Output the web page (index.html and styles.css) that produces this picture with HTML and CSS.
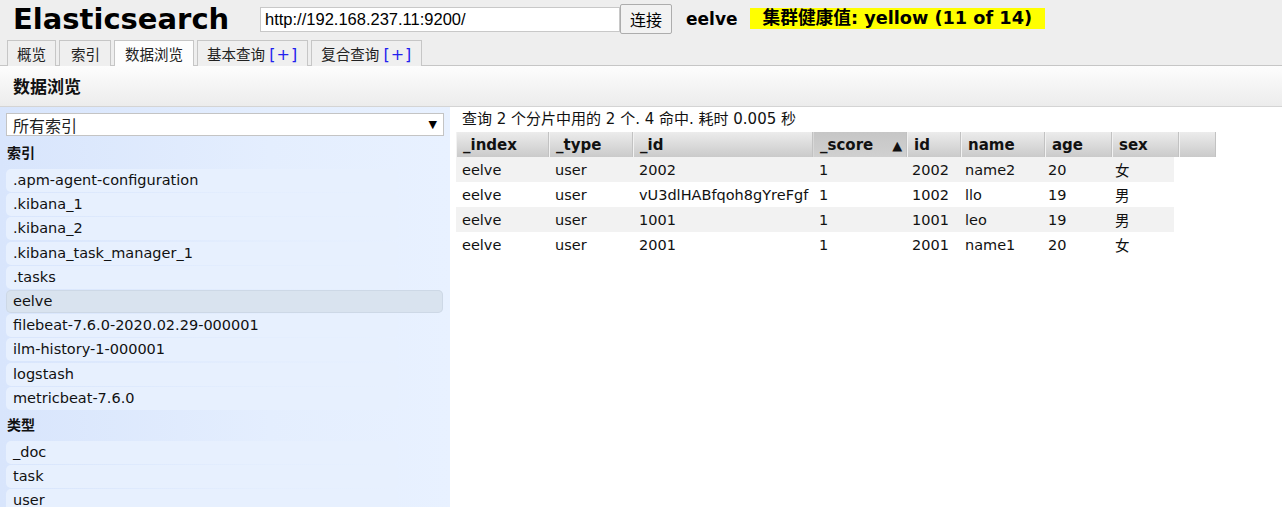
FILE: index.html
```html
<!DOCTYPE html>
<html lang="zh">
<head>
<meta charset="utf-8">
<title>Elasticsearch</title>
<link rel="stylesheet" href="styles.css">
</head>
<body>
<header class="top">
  <h1 class="logo">Elasticsearch</h1>
  <input class="url" type="text" value="http://192.168.237.11:9200/">
  <button class="connect">连接</button>
  <span class="cluster">eelve</span>
  <span class="health">集群健康值: yellow (11 of 14)</span>
</header>
<nav class="tabs">
  <span class="tab">概览</span>
  <span class="tab">索引</span>
  <span class="tab active">数据浏览</span>
  <span class="tab">基本查询 <span class="plus">[+]</span></span>
  <span class="tab">复合查询 <span class="plus">[+]</span></span>
</nav>
<div class="subhead">数据浏览</div>
<div class="main">
  <aside class="side">
    <div class="select"><span>所有索引</span><span class="arrow">▼</span></div>
    <div class="group">索引</div>
    <div class="item">.apm-agent-configuration</div>
    <div class="item">.kibana_1</div>
    <div class="item">.kibana_2</div>
    <div class="item">.kibana_task_manager_1</div>
    <div class="item">.tasks</div>
    <div class="item selected">eelve</div>
    <div class="item">filebeat-7.6.0-2020.02.29-000001</div>
    <div class="item">ilm-history-1-000001</div>
    <div class="item">logstash</div>
    <div class="item">metricbeat-7.6.0</div>
    <div class="group">类型</div>
    <div class="item">_doc</div>
    <div class="item">task</div>
    <div class="item">user</div>
  </aside>
  <section class="results">
    <div class="info">查询 2 个分片中用的 2 个. 4 命中. 耗时 0.005 秒</div>
    <div class="grid">
      <div class="row head">
        <span class="c h1">_index</span>
        <span class="c h2">_type</span>
        <span class="c h3">_id</span>
        <span class="c h4 sorted">_score<span class="tri">▲</span></span>
        <span class="c h5">id</span>
        <span class="c h6">name</span>
        <span class="c h7">age</span>
        <span class="c h8">sex</span>
        <span class="c h9"></span>
      </div>
      <div class="row odd">
        <span class="c c1">eelve</span><span class="c c2">user</span><span class="c c3">2002</span><span class="c c4">1</span><span class="c c5">2002</span><span class="c c6">name2</span><span class="c c7">20</span><span class="c c8">女</span>
      </div>
      <div class="row">
        <span class="c c1">eelve</span><span class="c c2">user</span><span class="c c3">vU3dlHABfqoh8gYreFgf</span><span class="c c4">1</span><span class="c c5">1002</span><span class="c c6">llo</span><span class="c c7">19</span><span class="c c8">男</span>
      </div>
      <div class="row odd">
        <span class="c c1">eelve</span><span class="c c2">user</span><span class="c c3">1001</span><span class="c c4">1</span><span class="c c5">1001</span><span class="c c6">leo</span><span class="c c7">19</span><span class="c c8">男</span>
      </div>
      <div class="row">
        <span class="c c1">eelve</span><span class="c c2">user</span><span class="c c3">2001</span><span class="c c4">1</span><span class="c c5">2001</span><span class="c c6">name1</span><span class="c c7">20</span><span class="c c8">女</span>
      </div>
    </div>
  </section>
</div>
</body>
</html>
```
FILE: styles.css
```css
html, body {
  margin: 0;
  padding: 0;
}
body {
  background: #eeeeee;
  font-family: "DejaVu Sans", "Noto Sans CJK SC", sans-serif;
  font-size: 14.5px;
  color: #111;
  height: 507px;
  overflow: hidden;
}
.top {
  display: flex;
  align-items: center;
  height: 37px;
  padding-left: 13px;
}
.logo {
  margin: 0 33px 0 0;
  font-size: 29px;
  font-weight: bold;
  color: #000;
  width: 214px;
  white-space: nowrap;
  line-height: 36px;
}
.url {
  box-sizing: border-box;
  width: 360px;
  height: 25px;
  margin: 1px 0 0 0;
  border: 1px solid #c8c8c8;
  background: #fff;
  padding: 0 4px;
  font-family: "Liberation Sans", sans-serif;
  font-size: 16.5px;
  color: #000;
}
.connect {
  box-sizing: border-box;
  width: 52px;
  height: 30px;
  margin: 0 14px 0 0;
  border: 1px solid #adadad;
  border-radius: 2px;
  background: #f2f2f2;
  font-family: "Noto Sans CJK SC", sans-serif;
  font-size: 16px;
  color: #000;
  padding: 0;
}
.cluster {
  font-weight: bold;
  font-size: 17px;
  color: #000;
  margin-right: 12px;
}
.health {
  background: #ffff00;
  font-weight: bold;
  font-size: 17.7px;
  color: #000;
  padding: 0 13px 0 13px;
  height: 21px;
  line-height: 21px;
  white-space: nowrap;
}
.tabs {
  display: flex;
  gap: 3px;
  margin-top: 3px;
  padding-left: 7px;
  height: 25px;
  border-bottom: 1px solid #c6c6c6;
}
.tab {
  box-sizing: border-box;
  height: 26px;
  border: 1px solid #c6c6c6;
  border-bottom: none;
  background: #efefef;
  padding: 0 9px;
  font-size: 14.5px;
  line-height: 26px;
  color: #222;
  font-family: "Noto Sans CJK SC", sans-serif;
  white-space: nowrap;
}
.tab:nth-child(2) { padding: 0 10px 0 11px; }
.tab.active {
  background: #fdfdfd;
  padding: 0 10px;
}
.plus {
  color: #2222ee;
  font-family: "DejaVu Sans", sans-serif;
  font-size: 16px;
  letter-spacing: 1px;
  margin-left: 1px;
}
.subhead {
  height: 40px;
  line-height: 40px;
  padding-left: 13px;
  font-size: 17px;
  font-weight: bold;
  font-family: "Noto Sans CJK SC", sans-serif;
  background: linear-gradient(to bottom, #fdfdfd, #ececec);
  border-bottom: 1px solid #d4d4d4;
  color: #111;
}
.main {
  display: flex;
  height: 400px;
}
.side {
  box-sizing: border-box;
  width: 450px;
  flex: none;
  padding: 6px 6px 0 6px;
  background: linear-gradient(to right, #d8e5fc 0%, #e4eefe 60%, #e8f1ff 100%);
}
.select {
  box-sizing: border-box;
  height: 23px;
  background: #fff;
  border: 1px solid #c4c4c4;
  display: flex;
  justify-content: space-between;
  align-items: center;
  padding: 0 6px;
  font-family: "Noto Sans CJK SC", sans-serif;
  font-size: 16px;
  color: #222;
}
.arrow {
  font-size: 11px;
  color: #000;
  font-family: "DejaVu Sans", sans-serif;
}
.group {
  font-family: "Noto Sans CJK SC", sans-serif;
  font-weight: bold;
  font-size: 14px;
  padding-left: 1px;
  height: 28px;
  line-height: 23px;
  margin-top: 5px;
  color: #111;
}
.item + .group { margin-top: 3px; }
.item {
  box-sizing: border-box;
  width: 392px;
  height: 23px;
  line-height: 23px;
  margin-bottom: 1.2px;
  padding-left: 7px;
  background: #e7f0fe;
  border-radius: 5px;
  color: #111;
  white-space: nowrap;
}
.item.selected {
  width: 437px;
  background: #d9e3ef;
  box-shadow: inset 0 0 0 1px #cdd8e6;
}
.results {
  flex: 1;
  background: #fff;
  padding: 4px 0 0 6px;
}
.info {
  height: 21px;
  line-height: 17px;
  padding-left: 6px;
  font-size: 15px;
  color: #111;
  white-space: nowrap;
}
.row {
  display: flex;
  height: 25px;
  line-height: 26px;
  width: 718px;
}
.row.odd { background: #f2f2f2; }
.row.head {
  width: 760px;
  line-height: 27px;
  font-weight: bold;
  font-size: 15px;
  color: #111;
}
.c {
  box-sizing: border-box;
  padding-left: 6px;
  white-space: nowrap;
  overflow: hidden;
  flex: none;
}
.head .c {
  height: 25px;
  background: linear-gradient(to bottom, #ececec, #cacaca);
  border-left: 1px solid #f2f2f2;
  border-right: 1px solid #c2c2c2;
}
.head .c.sorted {
  background: linear-gradient(to bottom, #c6c6c6, #d0d0d0);
  border-left: 1px solid #d8d8d8;
}
.tri {
  font-size: 13px;
  margin-left: 19px;
  font-family: "DejaVu Sans", sans-serif;
}
.h1, .c1 { width: 93px; }
.h2, .c2 { width: 84px; }
.h3, .c3 { width: 180px; }
.h4 { width: 94px; }
.h5 { width: 54px; }
.h6 { width: 84px; }
.h7 { width: 67px; }
.h8 { width: 67px; }
.h9 { width: 37px; }
.c4 { width: 93px; }
.c5 { width: 53px; }
.c6 { width: 83px; }
.c7 { width: 67px; }
.c8 { width: 65px; font-family: "Noto Sans CJK SC", sans-serif; }
```
